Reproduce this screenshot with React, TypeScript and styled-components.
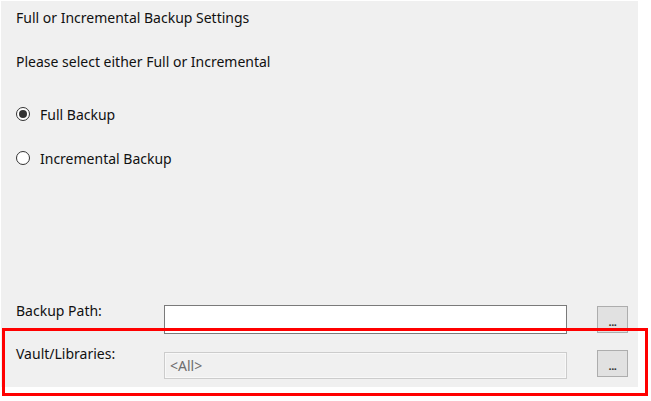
import styled, { createGlobalStyle } from "styled-components";

const GlobalStyle = createGlobalStyle`
  html, body {
    margin: 0;
    padding: 0;
    background: #ffffff;
  }
  body {
    font-family: "Noto Sans", "Open Sans", Arial, sans-serif;
    color: #000;
  }
`;

const Page = styled.div`
  position: relative;
  width: 651px;
  height: 401px;
  overflow: hidden;
`;

const Panel = styled.div`
  margin: 1px 0 0 1px;
  width: 637px;
  height: 386px;
  box-sizing: border-box;
  background: #f0f0f0;
  padding: 8px 0 8px 15px;
  display: flex;
  flex-direction: column;
  font-size: 14px;
  line-height: 17px;
  color: #111;
`;

const Text = styled.div<{ $top?: number }>`
  margin-top: ${(p) => p.$top ?? 0}px;
  white-space: nowrap;
`;

const RadioRow = styled.label<{ $top: number }>`
  margin-top: ${(p) => p.$top}px;
  display: flex;
  align-items: center;
  gap: 10px;
  height: 20px;
`;

const RadioCircle = styled.span<{ $checked?: boolean }>`
  width: 14px;
  height: 14px;
  box-sizing: border-box;
  border: 1px solid #333333;
  border-radius: 50%;
  background: #ffffff;
  display: flex;
  align-items: center;
  justify-content: center;

  &::after {
    content: "";
    width: 8px;
    height: 8px;
    border-radius: 50%;
    background: ${(p) => (p.$checked ? "#333333" : "transparent")};
  }
`;

const Spacer = styled.div`
  flex: 1;
`;

const FieldRow = styled.div<{ $top?: number }>`
  margin-top: ${(p) => p.$top ?? 0}px;
  display: grid;
  grid-template-columns: 148px 403px 31px;
  column-gap: 0;
  align-items: start;
`;

const Label = styled.div`
  white-space: nowrap;
`;

const Field = styled.div<{ $disabled?: boolean; $top: number; $h: number }>`
  margin-top: ${(p) => p.$top}px;
  height: ${(p) => p.$h}px;
  box-sizing: border-box;
  border: 1px solid ${(p) => (p.$disabled ? "#cccccc" : "#7a7a7a")};
  box-shadow: ${(p) => (p.$disabled ? "inset 0 0 0 1px #f8f8f8" : "none")};
  background: ${(p) => (p.$disabled ? "#f0f0f0" : "#ffffff")};
  color: #6d6d6d;
  padding: 0 5px;
  display: flex;
  align-items: center;
`;

const BrowseButton = styled.button<{ $top: number }>`
  margin: ${(p) => p.$top}px 0 0 30px;
  width: 31px;
  height: 27px;
  box-sizing: border-box;
  border: 1px solid #adadad;
  background: #e1e1e1;
  padding: 0 0 5px;
  font-family: inherit;
  font-size: 11px;
  font-weight: 700;
  line-height: 11px;
  letter-spacing: -0.5px;
  color: #333;
  display: flex;
  align-items: flex-end;
  justify-content: center;
`;

const Highlight = styled.div`
  position: absolute;
  left: 2px;
  top: 328px;
  width: 646px;
  height: 68px;
  box-sizing: border-box;
  border: 3px solid #ff0000;
  pointer-events: none;
`;

export default function App() {
  return (
    <Page>
      <GlobalStyle />
      <Panel>
        <Text>Full or Incremental Backup Settings</Text>
        <Text $top={27}>Please select either Full or Incremental</Text>
        <RadioRow $top={34}>
          <RadioCircle $checked />
          Full Backup
        </RadioRow>
        <RadioRow $top={24}>
          <RadioCircle />
          Incremental Backup
        </RadioRow>
        <Spacer />
        <FieldRow>
          <Label>Backup Path:</Label>
          <Field $top={3} $h={29} />
          <BrowseButton $top={4}>...</BrowseButton>
        </FieldRow>
        <FieldRow $top={11}>
          <Label>Vault/Libraries:</Label>
          <Field $disabled $top={7} $h={27}>
            &lt;All&gt;
          </Field>
          <BrowseButton $top={5}>...</BrowseButton>
        </FieldRow>
      </Panel>
      <Highlight />
    </Page>
  );
}
